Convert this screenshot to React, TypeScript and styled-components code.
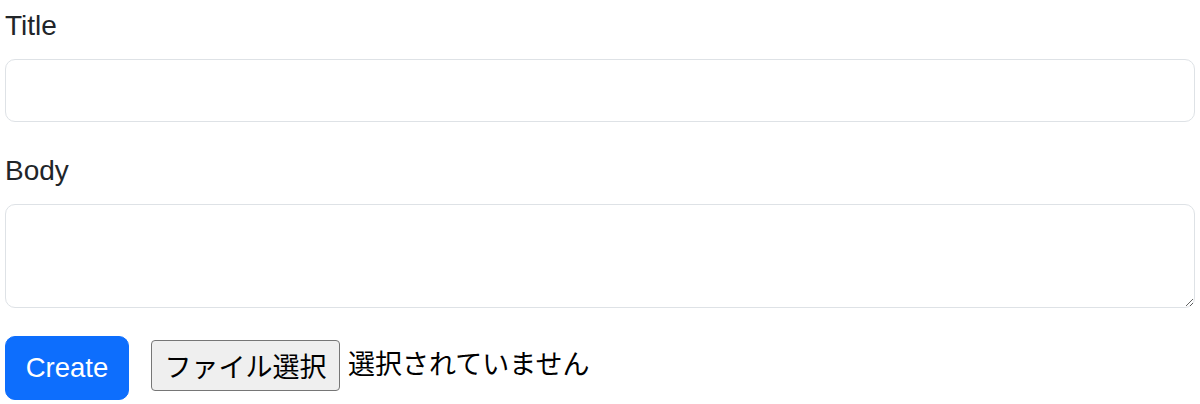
import React from "react";
import styled, { createGlobalStyle } from "styled-components";

const GlobalStyle = createGlobalStyle`
  html, body {
    margin: 0;
    padding: 0;
    background: #ffffff;
  }
  body {
    font-family: "Liberation Sans", Arial, "Noto Sans CJK JP", sans-serif;
    color: #212529;
  }
`;

const Form = styled.form`
  padding: 6px 5px 0 5px;
  width: 1190px;
`;

const Field = styled.div<{ $gap: number }>`
  margin-bottom: ${(p) => p.$gap}px;
`;

const Label = styled.label`
  display: block;
  font-size: 28px;
  line-height: 40px;
  margin-bottom: 13px;
  color: #212529;
`;

const TextInput = styled.input`
  display: block;
  box-sizing: border-box;
  width: 100%;
  height: 63px;
  padding: 10px 20px;
  font-size: 26.67px;
  font-family: inherit;
  color: #212529;
  background: #ffffff;
  border: 1px solid #dee2e6;
  border-radius: 10px;
  outline: none;
`;

const TextArea = styled.textarea`
  display: block;
  box-sizing: border-box;
  width: 100%;
  height: 104px;
  padding: 10px 20px;
  font-size: 26.67px;
  font-family: inherit;
  color: #212529;
  background: #ffffff;
  border: 1px solid #dee2e6;
  border-radius: 10px;
  resize: vertical;
  outline: none;
`;

const Actions = styled.div`
  display: flex;
  align-items: flex-start;
  gap: 22px;
`;

const SubmitButton = styled.button`
  box-sizing: border-box;
  width: 124px;
  height: 64px;
  padding: 0;
  font-size: 27.5px;
  font-family: "Liberation Sans", Arial, sans-serif;
  color: #ffffff;
  background: #0d6efd;
  border: 1px solid #0d6efd;
  border-radius: 10px;
  cursor: pointer;
`;

const FilePicker = styled.div`
  display: flex;
  align-items: center;
  margin-top: 4px;
  font-family: "Liberation Sans", Arial, "Noto Sans CJK JP", sans-serif;
  font-size: 27px;
  color: #000000;
`;

const FileButton = styled.span`
  box-sizing: border-box;
  display: inline-flex;
  align-items: center;
  justify-content: center;
  width: 189px;
  height: 51px;
  margin-right: 8px;
  background: #efefef;
  border: 1px solid #767676;
  border-radius: 4px;
  color: #000000;
`;

const FileStatus = styled.span`
  color: #000000;
  line-height: 1;
`;

export default function App() {
  return (
    <>
      <GlobalStyle />
      <Form onSubmit={(e) => e.preventDefault()}>
        <Field $gap={29}>
          <Label htmlFor="title">Title</Label>
          <TextInput id="title" type="text" />
        </Field>
        <Field $gap={28}>
          <Label htmlFor="body">Body</Label>
          <TextArea id="body" />
        </Field>
        <Actions>
          <SubmitButton type="submit">Create</SubmitButton>
          <FilePicker>
            <FileButton>ファイル選択</FileButton>
            <FileStatus>選択されていません</FileStatus>
          </FilePicker>
        </Actions>
      </Form>
    </>
  );
}
